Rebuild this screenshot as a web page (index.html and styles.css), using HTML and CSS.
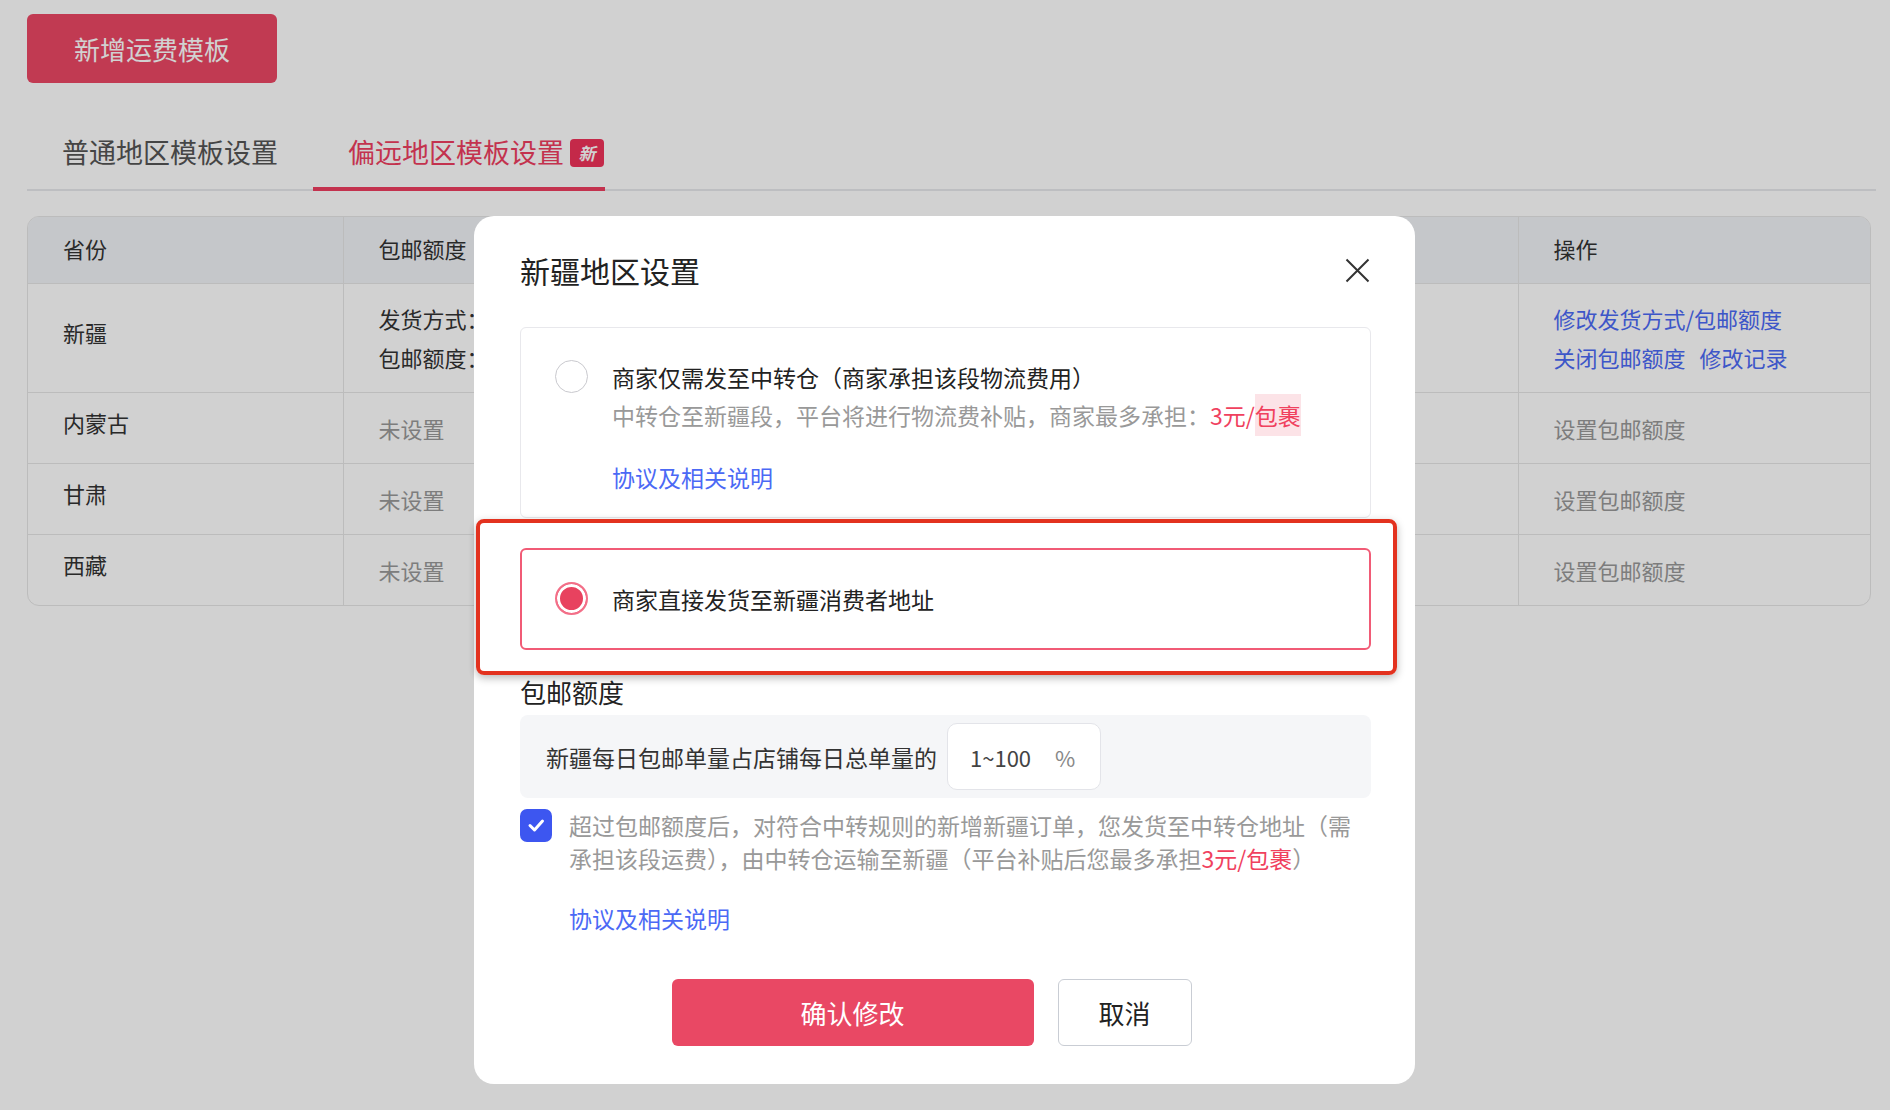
FILE: index.html
```html
<!DOCTYPE html>
<html lang="zh-CN">
<head>
    <meta charset="UTF-8">
    <title>运费模板</title>
    <link rel="stylesheet" href="styles.css">
</head>
<body>
    <div class="page">
        <button class="btn-add">新增运费模板</button>

        <div class="tabs">
            <div class="tab">普通地区模板设置</div>
            <div class="tab tab-active">偏远地区模板设置<span class="tab-badge">新</span></div>
        </div>

        <div class="table-wrap">
            <table class="region-table">
                <colgroup>
                    <col class="col-province">
                    <col>
                    <col class="col-action">
                </colgroup>
                <thead>
                    <tr>
                        <th>省份</th>
                        <th>包邮额度</th>
                        <th>操作</th>
                    </tr>
                </thead>
                <tbody>
                    <tr class="row-multi">
                        <td>新疆</td>
                        <td>
                            <div>发货方式：商家直接发货至新疆消费者地址</div>
                            <div>包邮额度：30%</div>
                        </td>
                        <td>
                            <div><a class="link">修改发货方式/包邮额度</a></div>
                            <div class="link-row"><a class="link">关闭包邮额度</a><a class="link">修改记录</a></div>
                        </td>
                    </tr>
                    <tr>
                        <td>内蒙古</td>
                        <td class="muted">未设置</td>
                        <td class="muted">设置包邮额度</td>
                    </tr>
                    <tr>
                        <td>甘肃</td>
                        <td class="muted">未设置</td>
                        <td class="muted">设置包邮额度</td>
                    </tr>
                    <tr>
                        <td>西藏</td>
                        <td class="muted">未设置</td>
                        <td class="muted">设置包邮额度</td>
                    </tr>
                </tbody>
            </table>
        </div>
    </div>

    <div class="mask"></div>

    <div class="modal">
        <div class="modal-header">
            <div class="modal-title">新疆地区设置</div>
            <svg class="modal-close" viewBox="0 0 25 25" width="25" height="25">
                <path d="M1.5 1.5L23.5 23.5M23.5 1.5L1.5 23.5" stroke="#333" stroke-width="2" fill="none"/>
            </svg>
        </div>

        <div class="option">
            <span class="radio"></span>
            <div class="option-body">
                <div class="option-title">商家仅需发至中转仓（商家承担该段物流费用）</div>
                <div class="option-desc">中转仓至新疆段，平台将进行物流费补贴，商家最多承担：<span class="price">3元/<span class="price-mark">包裹</span></span></div>
                <a class="link option-link">协议及相关说明</a>
            </div>
        </div>

        <div class="option option-selected">
            <span class="radio radio-checked"></span>
            <div class="option-body">
                <div class="option-title">商家直接发货至新疆消费者地址</div>
            </div>
        </div>

        <div class="quota-label">包邮额度</div>
        <div class="quota-box">
            <span>新疆每日包邮单量占店铺每日总单量的</span>
            <label class="quota-field">
                <input class="quota-input" type="text" placeholder="1~100">
                <span class="quota-unit">%</span>
            </label>
        </div>

        <div class="agree">
            <span class="checkbox">
                <svg viewBox="0 0 32 32" width="32" height="32">
                    <path d="M10 16.5l4.5 4.5 8-9" stroke="#fff" stroke-width="3" fill="none" stroke-linecap="round" stroke-linejoin="round"/>
                </svg>
            </span>
            <div class="agree-text">超过包邮额度后，对符合中转规则的新增新疆订单，您发货至中转仓地址（需<br>承担该段运费），由中转仓运输至新疆（平台补贴后您最多承担<span class="price">3元/包裹</span>）</div>
        </div>
        <a class="link agree-link">协议及相关说明</a>

        <div class="modal-footer">
            <button class="btn btn-primary">确认修改</button>
            <button class="btn btn-default">取消</button>
        </div>
    </div>
</body>
</html>
```

FILE: styles.css
```css
* {
    box-sizing: border-box;
}

body {
    margin: 0;
    font-family: "Noto Sans CJK SC", "Noto Sans", sans-serif;
    color: #333;
    background-color: #fff;
}

.page {
    padding: 14px 14px 0 27px;
}

.btn-add {
    display: block;
    width: 250px;
    height: 69px;
    border: none;
    border-radius: 6px;
    background-color: #ec4764;
    color: #fff;
    font-family: inherit;
    font-size: 26px;
}

/* tabs */
.tabs {
    display: flex;
    margin-top: 34px;
    border-bottom: 2px solid #e7e8ec;
}

.tab {
    padding: 15px 35px;
    margin-bottom: -2px;
    border-bottom: 4px solid transparent;
    font-size: 27px;
    line-height: 40px;
    color: #555;
}

.tab-active {
    padding-right: 1px;
    color: #ee3e60;
    border-bottom-color: #ee3e60;
}

.tab-badge {
    display: inline-block;
    width: 34px;
    height: 28px;
    margin-left: 6px;
    border-radius: 4px;
    background-color: #f0325a;
    color: #fff;
    font-size: 17px;
    font-weight: bold;
    font-style: italic;
    line-height: 28px;
    text-align: center;
    vertical-align: 3px;
}

/* table */
.table-wrap {
    margin: 25px 5px 0 0;
    border: 1px solid #e6e6e6;
    border-radius: 12px;
    overflow: hidden;
}

.region-table {
    width: 100%;
    border-collapse: collapse;
    table-layout: fixed;
    font-size: 22px;
}

.col-province {
    width: 315px;
}

.col-action {
    width: 352px;
}

.region-table th,
.region-table td {
    padding: 19px 35px;
    border-right: 1px solid #e6e6e6;
    border-bottom: 1px solid #e6e6e6;
    line-height: 32px;
    text-align: left;
    vertical-align: middle;
    white-space: nowrap;
}

.region-table th {
    padding: 15px 35px 19px;
    background-color: #f1f3f7;
    font-weight: normal;
    color: #333;
}

.region-table td:first-child {
    padding-top: 13px;
    padding-bottom: 25px;
}

.region-table th:last-child,
.region-table td:last-child {
    border-right: none;
}

.region-table tbody tr:last-child td {
    border-bottom: none;
}

.region-table .row-multi td {
    padding: 15px 35px;
    line-height: 39px;
}

.region-table .row-multi td:first-child {
    padding: 9px 35px 21px;
}

.region-table .muted {
    color: #999;
}

.link {
    color: #4b69f5;
    cursor: pointer;
}

.link-row {
    display: flex;
    gap: 14px;
}

/* modal */
.mask {
    position: fixed;
    inset: 0;
    background-color: rgba(0, 0, 0, 0.18);
}

.modal {
    position: fixed;
    top: 216px;
    left: 474px;
    width: 941px;
    padding: 34px 44px 38px 46px;
    background-color: #fff;
    border-radius: 20px;
}

.modal-header {
    display: flex;
    justify-content: space-between;
    align-items: center;
    margin-bottom: 37px;
}

.modal-title {
    font-size: 30px;
    line-height: 40px;
    color: #222;
}

.modal-close {
    display: block;
    margin-right: 1px;
}

.option {
    display: flex;
    align-items: flex-start;
    gap: 24px;
    padding: 30px 34px 21px;
    border: 1px solid #e8e8ec;
    border-radius: 6px;
    font-size: 23px;
    line-height: 38px;
}

.option-selected {
    position: relative;
    margin-top: 30px;
    padding: 30px 33px;
    border: 2px solid #f15b76;
}

/* annotation frame drawn around the chosen option */
.option-selected::after {
    content: "";
    position: absolute;
    top: -31px;
    left: -46px;
    right: -28px;
    bottom: -27px;
    border: 4px solid #e3321f;
    border-radius: 8px;
    box-shadow: 0 3px 8px rgba(0, 0, 0, 0.28);
    pointer-events: none;
}

.radio {
    flex: none;
    width: 33px;
    height: 33px;
    margin-top: 2px;
    border: 1.5px solid #c9c9ce;
    border-radius: 50%;
}

.radio-checked {
    border: 2px solid #f36f88;
    background-color: #e8425f;
    box-shadow: inset 0 0 0 3px #fff;
}

.option-title {
    color: #222;
}

.option-desc {
    color: #999;
}

.price {
    color: #f0415e;
}

.price-mark {
    padding: 4px 0;
    background-color: #fce3e7;
}

.option-link {
    display: block;
    margin-top: 24px;
}

.quota-label {
    margin-top: 24px;
    font-size: 26px;
    line-height: 36px;
    color: #222;
}

.quota-box {
    display: flex;
    align-items: center;
    margin-top: 5px;
    padding: 8px 26px;
    border-radius: 8px;
    background-color: #f5f6f8;
    font-size: 23px;
    line-height: 34px;
    color: #333;
}

.quota-field {
    display: flex;
    align-items: center;
    width: 154px;
    height: 67px;
    margin-left: 10px;
    padding: 0 22px;
    border: 1.5px solid #e3e4e9;
    border-radius: 10px;
    background-color: #fff;
}

.quota-input {
    width: 70px;
    padding: 0;
    border: none;
    outline: none;
    font-family: inherit;
    font-size: 22px;
    color: #333;
}

.quota-input::placeholder {
    color: #444;
}

.quota-unit {
    margin-left: 15px;
    font-size: 22px;
    color: #888;
}

.agree {
    display: flex;
    align-items: flex-start;
    gap: 17px;
    margin-top: 11px;
    font-size: 23px;
    line-height: 33px;
    color: #999;
}

.checkbox {
    flex: none;
    width: 32px;
    height: 33px;
    border-radius: 7px;
    background-color: #3d56f0;
}

.checkbox svg {
    display: block;
}

.agree-text {
    white-space: nowrap;
}

.agree-link {
    display: block;
    margin-top: 26px;
    padding-left: 49px;
    font-size: 23px;
    line-height: 34px;
}

.modal-footer {
    display: flex;
    justify-content: center;
    gap: 24px;
    margin-top: 44px;
    padding-right: 28px;
}

.btn {
    height: 67px;
    border-radius: 6px;
    font-family: inherit;
    font-size: 26px;
}

.btn-primary {
    width: 362px;
    border: none;
    background-color: #e94864;
    color: #fff;
}

.btn-default {
    width: 134px;
    border: 1.5px solid #c9cdd4;
    background-color: #fff;
    color: #222;
}
```
